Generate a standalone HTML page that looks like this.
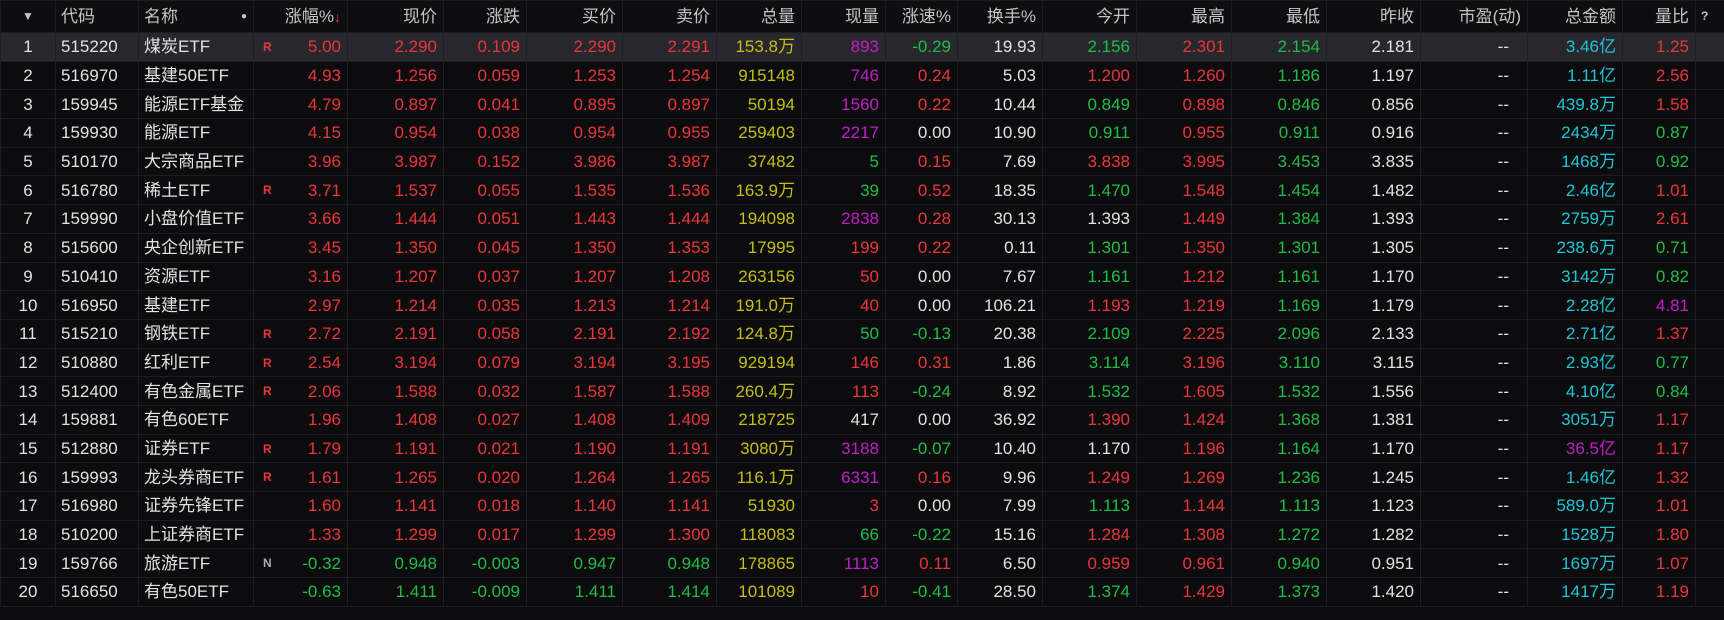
<!DOCTYPE html>
<html><head><meta charset="utf-8"><style>
html,body{margin:0;padding:0;background:#0c0c0e;width:1724px;height:620px;overflow:hidden}
table{border-collapse:collapse;table-layout:fixed;width:1724px;font-family:"Liberation Sans","Noto Sans CJK SC",sans-serif;font-size:17px;color:#e2e2e2}
td,th{border:1px solid #1e1e22;padding:0 6px 0 0;text-align:right;white-space:nowrap;overflow:hidden;height:27.7px;line-height:27px}
th{height:31px;font-weight:normal;color:#c4c4c4;background:#0e0e10}
tr.sel td{background:#27272d}
td.n,th.n{text-align:center;padding:0}
td.l,th.l{text-align:left;padding:0 0 0 5px}
.r{color:#e8363b}.g{color:#1ebd45}.y{color:#c4bf14}.p{color:#c21ec8}.c{color:#1cc6d6}.w{color:#e2e2e2}
td.m{position:relative}
.mk{position:absolute;left:9px;top:1px;font-size:12px;font-weight:bold}
.mr{color:#e8363b}.mn{color:#aaa}
</style></head><body>
<table>
<colgroup><col style="width:55px"><col style="width:83px"><col style="width:115px"><col style="width:94px"><col style="width:96px"><col style="width:83px"><col style="width:96px"><col style="width:94px"><col style="width:85px"><col style="width:84px"><col style="width:72px"><col style="width:85px"><col style="width:94px"><col style="width:95px"><col style="width:95px"><col style="width:94px"><col style="width:107px"><col style="width:95px"><col style="width:73px"><col style="width:29px"></colgroup>
<tr><th class="n" style="font-size:12px">▼</th><th class="l">代码</th><th class="l">名称<span style="float:right;margin-right:6px;font-size:10px">●</span></th><th>涨幅%<span class="r" style="font-size:14px">↓</span></th><th>现价</th><th>涨跌</th><th>买价</th><th>卖价</th><th>总量</th><th>现量</th><th>涨速%</th><th>换手%</th><th>今开</th><th>最高</th><th>最低</th><th>昨收</th><th>市盈(动)</th><th>总金额</th><th>量比</th><th class="l" style="font-size:12px;font-weight:bold">?</th></tr>
<tr class="sel"><td class="n">1</td><td class="l">515220</td><td class="l">煤炭ETF</td><td class="m r"><span class="mk mr">R</span>5.00</td><td class="r">2.290</td><td class="r">0.109</td><td class="r">2.290</td><td class="r">2.291</td><td class="y">153.8万</td><td class="p">893</td><td class="g">-0.29</td><td>19.93</td><td class="g">2.156</td><td class="r">2.301</td><td class="g">2.154</td><td>2.181</td><td style="padding-right:18px">--</td><td class="c">3.46亿</td><td class="r">1.25</td><td></td></tr>
<tr><td class="n">2</td><td class="l">516970</td><td class="l">基建50ETF</td><td class="m r">4.93</td><td class="r">1.256</td><td class="r">0.059</td><td class="r">1.253</td><td class="r">1.254</td><td class="y">915148</td><td class="p">746</td><td class="r">0.24</td><td>5.03</td><td class="r">1.200</td><td class="r">1.260</td><td class="g">1.186</td><td>1.197</td><td style="padding-right:18px">--</td><td class="c">1.11亿</td><td class="r">2.56</td><td></td></tr>
<tr><td class="n">3</td><td class="l">159945</td><td class="l">能源ETF基金</td><td class="m r">4.79</td><td class="r">0.897</td><td class="r">0.041</td><td class="r">0.895</td><td class="r">0.897</td><td class="y">50194</td><td class="p">1560</td><td class="r">0.22</td><td>10.44</td><td class="g">0.849</td><td class="r">0.898</td><td class="g">0.846</td><td>0.856</td><td style="padding-right:18px">--</td><td class="c">439.8万</td><td class="r">1.58</td><td></td></tr>
<tr><td class="n">4</td><td class="l">159930</td><td class="l">能源ETF</td><td class="m r">4.15</td><td class="r">0.954</td><td class="r">0.038</td><td class="r">0.954</td><td class="r">0.955</td><td class="y">259403</td><td class="p">2217</td><td>0.00</td><td>10.90</td><td class="g">0.911</td><td class="r">0.955</td><td class="g">0.911</td><td>0.916</td><td style="padding-right:18px">--</td><td class="c">2434万</td><td class="g">0.87</td><td></td></tr>
<tr><td class="n">5</td><td class="l">510170</td><td class="l">大宗商品ETF</td><td class="m r">3.96</td><td class="r">3.987</td><td class="r">0.152</td><td class="r">3.986</td><td class="r">3.987</td><td class="y">37482</td><td class="g">5</td><td class="r">0.15</td><td>7.69</td><td class="r">3.838</td><td class="r">3.995</td><td class="g">3.453</td><td>3.835</td><td style="padding-right:18px">--</td><td class="c">1468万</td><td class="g">0.92</td><td></td></tr>
<tr><td class="n">6</td><td class="l">516780</td><td class="l">稀土ETF</td><td class="m r"><span class="mk mr">R</span>3.71</td><td class="r">1.537</td><td class="r">0.055</td><td class="r">1.535</td><td class="r">1.536</td><td class="y">163.9万</td><td class="g">39</td><td class="r">0.52</td><td>18.35</td><td class="g">1.470</td><td class="r">1.548</td><td class="g">1.454</td><td>1.482</td><td style="padding-right:18px">--</td><td class="c">2.46亿</td><td class="r">1.01</td><td></td></tr>
<tr><td class="n">7</td><td class="l">159990</td><td class="l">小盘价值ETF</td><td class="m r">3.66</td><td class="r">1.444</td><td class="r">0.051</td><td class="r">1.443</td><td class="r">1.444</td><td class="y">194098</td><td class="p">2838</td><td class="r">0.28</td><td>30.13</td><td>1.393</td><td class="r">1.449</td><td class="g">1.384</td><td>1.393</td><td style="padding-right:18px">--</td><td class="c">2759万</td><td class="r">2.61</td><td></td></tr>
<tr><td class="n">8</td><td class="l">515600</td><td class="l">央企创新ETF</td><td class="m r">3.45</td><td class="r">1.350</td><td class="r">0.045</td><td class="r">1.350</td><td class="r">1.353</td><td class="y">17995</td><td class="r">199</td><td class="r">0.22</td><td>0.11</td><td class="g">1.301</td><td class="r">1.350</td><td class="g">1.301</td><td>1.305</td><td style="padding-right:18px">--</td><td class="c">238.6万</td><td class="g">0.71</td><td></td></tr>
<tr><td class="n">9</td><td class="l">510410</td><td class="l">资源ETF</td><td class="m r">3.16</td><td class="r">1.207</td><td class="r">0.037</td><td class="r">1.207</td><td class="r">1.208</td><td class="y">263156</td><td class="r">50</td><td>0.00</td><td>7.67</td><td class="g">1.161</td><td class="r">1.212</td><td class="g">1.161</td><td>1.170</td><td style="padding-right:18px">--</td><td class="c">3142万</td><td class="g">0.82</td><td></td></tr>
<tr><td class="n">10</td><td class="l">516950</td><td class="l">基建ETF</td><td class="m r">2.97</td><td class="r">1.214</td><td class="r">0.035</td><td class="r">1.213</td><td class="r">1.214</td><td class="y">191.0万</td><td class="r">40</td><td>0.00</td><td>106.21</td><td class="r">1.193</td><td class="r">1.219</td><td class="g">1.169</td><td>1.179</td><td style="padding-right:18px">--</td><td class="c">2.28亿</td><td class="p">4.81</td><td></td></tr>
<tr><td class="n">11</td><td class="l">515210</td><td class="l">钢铁ETF</td><td class="m r"><span class="mk mr">R</span>2.72</td><td class="r">2.191</td><td class="r">0.058</td><td class="r">2.191</td><td class="r">2.192</td><td class="y">124.8万</td><td class="g">50</td><td class="g">-0.13</td><td>20.38</td><td class="g">2.109</td><td class="r">2.225</td><td class="g">2.096</td><td>2.133</td><td style="padding-right:18px">--</td><td class="c">2.71亿</td><td class="r">1.37</td><td></td></tr>
<tr><td class="n">12</td><td class="l">510880</td><td class="l">红利ETF</td><td class="m r"><span class="mk mr">R</span>2.54</td><td class="r">3.194</td><td class="r">0.079</td><td class="r">3.194</td><td class="r">3.195</td><td class="y">929194</td><td class="r">146</td><td class="r">0.31</td><td>1.86</td><td class="g">3.114</td><td class="r">3.196</td><td class="g">3.110</td><td>3.115</td><td style="padding-right:18px">--</td><td class="c">2.93亿</td><td class="g">0.77</td><td></td></tr>
<tr><td class="n">13</td><td class="l">512400</td><td class="l">有色金属ETF</td><td class="m r"><span class="mk mr">R</span>2.06</td><td class="r">1.588</td><td class="r">0.032</td><td class="r">1.587</td><td class="r">1.588</td><td class="y">260.4万</td><td class="r">113</td><td class="g">-0.24</td><td>8.92</td><td class="g">1.532</td><td class="r">1.605</td><td class="g">1.532</td><td>1.556</td><td style="padding-right:18px">--</td><td class="c">4.10亿</td><td class="g">0.84</td><td></td></tr>
<tr><td class="n">14</td><td class="l">159881</td><td class="l">有色60ETF</td><td class="m r">1.96</td><td class="r">1.408</td><td class="r">0.027</td><td class="r">1.408</td><td class="r">1.409</td><td class="y">218725</td><td>417</td><td>0.00</td><td>36.92</td><td class="r">1.390</td><td class="r">1.424</td><td class="g">1.368</td><td>1.381</td><td style="padding-right:18px">--</td><td class="c">3051万</td><td class="r">1.17</td><td></td></tr>
<tr><td class="n">15</td><td class="l">512880</td><td class="l">证券ETF</td><td class="m r"><span class="mk mr">R</span>1.79</td><td class="r">1.191</td><td class="r">0.021</td><td class="r">1.190</td><td class="r">1.191</td><td class="y">3080万</td><td class="p">3188</td><td class="g">-0.07</td><td>10.40</td><td>1.170</td><td class="r">1.196</td><td class="g">1.164</td><td>1.170</td><td style="padding-right:18px">--</td><td class="p">36.5亿</td><td class="r">1.17</td><td></td></tr>
<tr><td class="n">16</td><td class="l">159993</td><td class="l">龙头券商ETF</td><td class="m r"><span class="mk mr">R</span>1.61</td><td class="r">1.265</td><td class="r">0.020</td><td class="r">1.264</td><td class="r">1.265</td><td class="y">116.1万</td><td class="p">6331</td><td class="r">0.16</td><td>9.96</td><td class="r">1.249</td><td class="r">1.269</td><td class="g">1.236</td><td>1.245</td><td style="padding-right:18px">--</td><td class="c">1.46亿</td><td class="r">1.32</td><td></td></tr>
<tr><td class="n">17</td><td class="l">516980</td><td class="l">证券先锋ETF</td><td class="m r">1.60</td><td class="r">1.141</td><td class="r">0.018</td><td class="r">1.140</td><td class="r">1.141</td><td class="y">51930</td><td class="r">3</td><td>0.00</td><td>7.99</td><td class="g">1.113</td><td class="r">1.144</td><td class="g">1.113</td><td>1.123</td><td style="padding-right:18px">--</td><td class="c">589.0万</td><td class="r">1.01</td><td></td></tr>
<tr><td class="n">18</td><td class="l">510200</td><td class="l">上证券商ETF</td><td class="m r">1.33</td><td class="r">1.299</td><td class="r">0.017</td><td class="r">1.299</td><td class="r">1.300</td><td class="y">118083</td><td class="g">66</td><td class="g">-0.22</td><td>15.16</td><td class="r">1.284</td><td class="r">1.308</td><td class="g">1.272</td><td>1.282</td><td style="padding-right:18px">--</td><td class="c">1528万</td><td class="r">1.80</td><td></td></tr>
<tr><td class="n">19</td><td class="l">159766</td><td class="l">旅游ETF</td><td class="m g"><span class="mk mn">N</span>-0.32</td><td class="g">0.948</td><td class="g">-0.003</td><td class="g">0.947</td><td class="g">0.948</td><td class="y">178865</td><td class="p">1113</td><td class="r">0.11</td><td>6.50</td><td class="r">0.959</td><td class="r">0.961</td><td class="g">0.940</td><td>0.951</td><td style="padding-right:18px">--</td><td class="c">1697万</td><td class="r">1.07</td><td></td></tr>
<tr><td class="n">20</td><td class="l">516650</td><td class="l">有色50ETF</td><td class="m g">-0.63</td><td class="g">1.411</td><td class="g">-0.009</td><td class="g">1.411</td><td class="g">1.414</td><td class="y">101089</td><td class="r">10</td><td class="g">-0.41</td><td>28.50</td><td class="g">1.374</td><td class="r">1.429</td><td class="g">1.373</td><td>1.420</td><td style="padding-right:18px">--</td><td class="c">1417万</td><td class="r">1.19</td><td></td></tr>
</table>
</body></html>
